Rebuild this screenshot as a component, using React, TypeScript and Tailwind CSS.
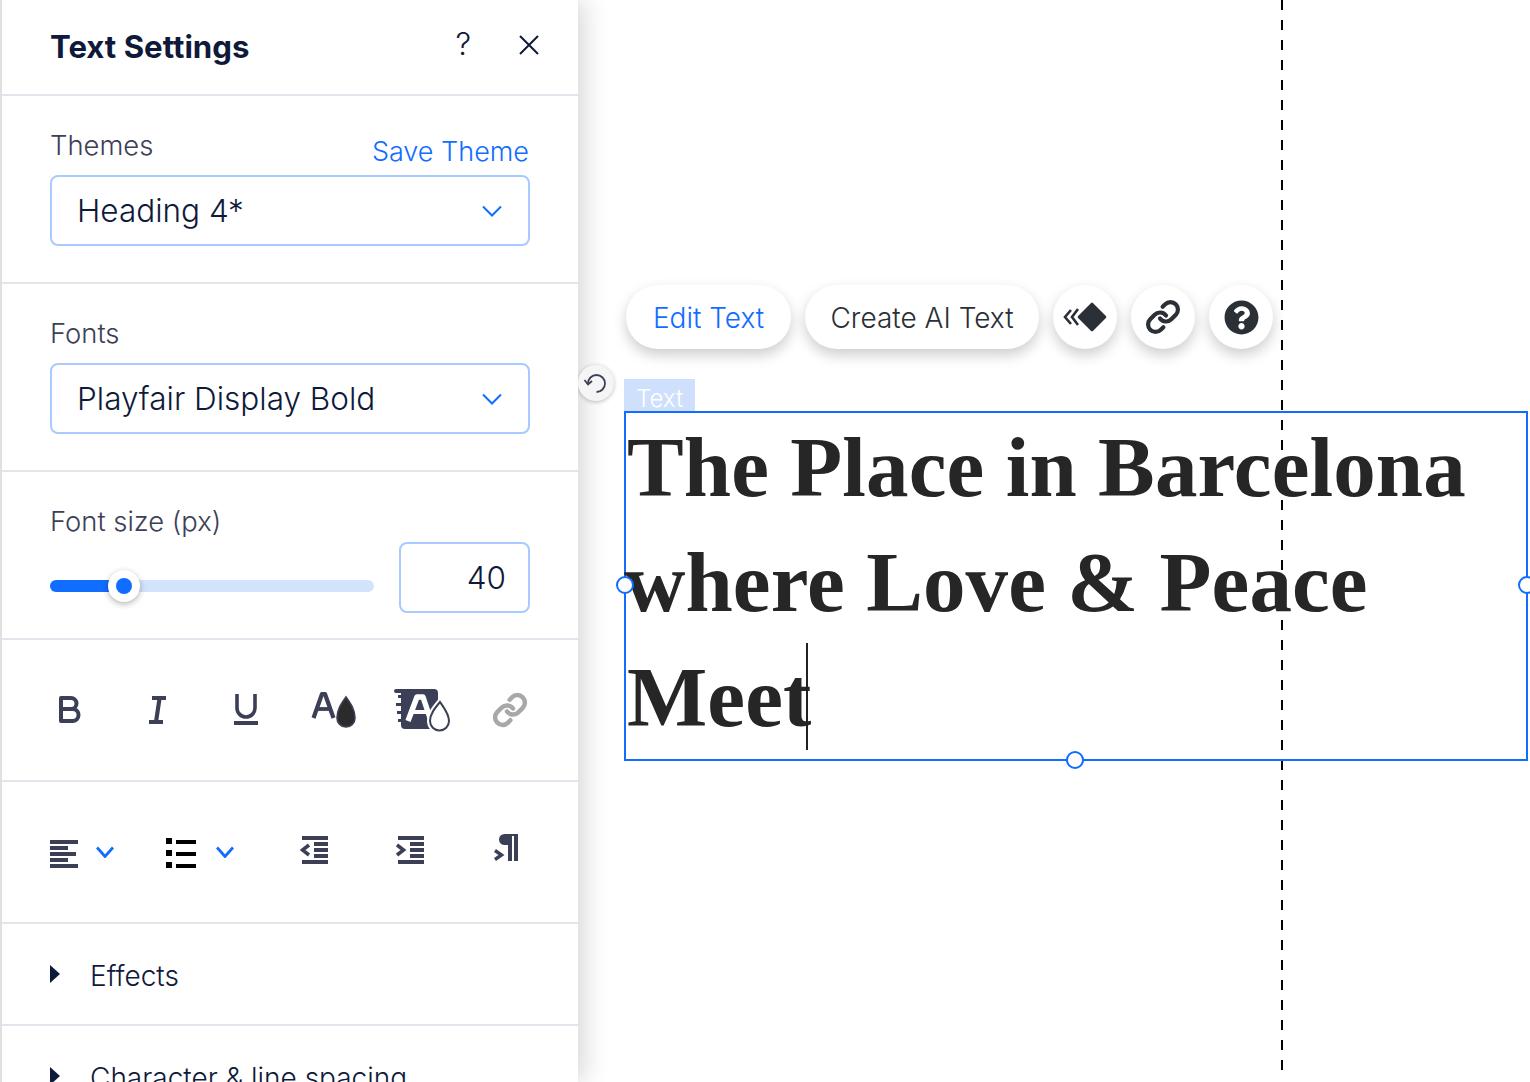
import { Link as LinkIcon } from "lucide-react";
import { FaQuestionCircle } from "react-icons/fa";

const ink = "#3b4057";

function Chevron({ width = 20, weight = 2 }: { width?: number; weight?: number }) {
  return (
    <svg width={width} height={12} viewBox={`0 0 ${width} 12`} fill="none" stroke="#116dff" strokeWidth={weight}>
      <path d={`M1 1.500 ${width / 2} 10.500 ${width - 1} 1.500`} />
    </svg>
  );
}

function Bars({ rows }: { rows: [number, number, number][] }) {
  return (
    <>
      {rows.map(([x, y, w]) => (
        <rect key={`${x}-${y}`} x={x} y={y} width={w} height="4" />
      ))}
    </>
  );
}

function BoldIcon() {
  return (
    <svg width="24" height="30" viewBox="0 0 24 30" fill="none" stroke={ink} strokeWidth="4">
      <path d="M3 3h10a5 5 0 0 1 0 11H3zM3 14h11.500a5.800 5.800 0 0 1 0 12H3z" strokeLinejoin="round" />
    </svg>
  );
}

function ItalicIcon() {
  return (
    <svg width="18" height="30" viewBox="0 0 18 30" fill={ink}>
      <path d="M3 1h14v4h-4.600l-3 20H14v4H0v-4h5.200l3-20H3z" />
    </svg>
  );
}

function UnderlineIcon() {
  return (
    <svg width="24" height="34" viewBox="0 0 24 34" fill="none" stroke={ink} strokeWidth="3.600">
      <path d="M3 1v14a9 9 0 0 0 18 0V1" />
      <path d="M0 30h24" strokeWidth="4" />
    </svg>
  );
}

function TextColorIcon() {
  return (
    <svg width="46" height="38" viewBox="0 0 46 38" fill="none">
      <path d="M2.500 27 11 3h3l8.500 24" stroke={ink} strokeWidth="4.200" strokeLinejoin="round" />
      <path d="M6 18h13" stroke={ink} strokeWidth="3.800" />
      <path d="M35 6c5 7 9 13 9 21a9 9 0 0 1-18 0c0-8 4-14 9-21z" fill="#2b2b2b" stroke={ink} strokeWidth="1.600" />
    </svg>
  );
}

function HighlightIcon() {
  return (
    <svg width="56" height="43" viewBox="0 0 56 43" fill="none">
      <path
        d="M0 2q0-2 2-2h38q4 0 4 4v34q0 2-2 2H11q-4 0-4-4v-3H4v-3h3v-5H3v-3h4v-5H2v-3h5v-5H4v-3h3V4H2q-2 0-2-2z"
        fill={ink}
      />
      <path d="M14 32 23 8h6l8 24" stroke="#fff" strokeWidth="5.500" strokeLinejoin="round" />
      <path d="M18 23h15" stroke="#fff" strokeWidth="4" />
      <path d="M46 13c4 6 9 12 9 19a9.500 9.500 0 0 1-19 0c0-7 5-13 10-19z" stroke="#fff" strokeWidth="6" />
      <path d="M46 13c4 6 9 12 9 19a9.500 9.500 0 0 1-19 0c0-7 5-13 10-19z" fill="#fff" stroke={ink} strokeWidth="2" />
    </svg>
  );
}

function AlignIcon() {
  return (
    <svg width="28" height="28" viewBox="0 0 28 28" fill={ink} className="mt-[4px]">
      <Bars rows={[[0, 0, 28], [0, 6, 18], [0, 12, 26], [0, 18, 18], [0, 24, 28]]} />
    </svg>
  );
}

function ListIcon() {
  return (
    <svg width="30" height="30" viewBox="0 0 30 30" fill="#000" className="mt-[2px]">
      <rect x="0" y="0" width="6" height="6" />
      <rect x="0" y="12" width="6" height="6" />
      <rect x="0" y="24" width="6" height="6" />
      <Bars rows={[[10, 2, 20], [10, 14, 20], [10, 26, 20]]} />
    </svg>
  );
}

function OutdentIcon() {
  return (
    <svg width="28" height="28" viewBox="0 0 28 28" fill={ink} className="mb-[4px]">
      <Bars rows={[[2, 0, 26], [14, 6, 14], [14, 12, 14], [14, 18, 14], [2, 24, 26]]} />
      <path d="M9 9 2.500 14 9 19" fill="none" stroke={ink} strokeWidth="3.600" />
    </svg>
  );
}

function IndentIcon() {
  return (
    <svg width="28" height="28" viewBox="0 0 28 28" fill={ink} className="mb-[4px]">
      <Bars rows={[[2, 0, 26], [14, 6, 14], [14, 12, 14], [14, 18, 14], [2, 24, 26]]} />
      <path d="M1 9 7.500 14 1 19" fill="none" stroke={ink} strokeWidth="3.600" />
    </svg>
  );
}

function PilcrowIcon() {
  return (
    <svg width="24" height="27" viewBox="0 0 24 27" fill={ink} className="mb-[9px]">
      <path d="M10.500 0H24v27h-4V2h-2v25h-4V11h-3.500a5.500 5.500 0 0 1 0-11z" />
      <path d="M1 16.500 7.500 21 1 25.500" fill="none" stroke={ink} strokeWidth="3.400" />
    </svg>
  );
}

function Caret() {
  return (
    <svg width="10" height="18" viewBox="0 0 10 18" fill="#0f1a3a">
      <path d="M0 0l10 9-10 9z" />
    </svg>
  );
}

function UndoIcon() {
  return (
    <svg width="26" height="26" viewBox="0 0 26 26" fill="none" stroke={ink} strokeWidth="1.800">
      <path d="M5 13.500a8.500 8.500 0 1 1 8.500 8.500" />
      <path d="M1.500 10 5 14.500 9 11" />
    </svg>
  );
}

function Select({ value }: { value: string }) {
  return (
    <div className="flex h-[71px] w-[480px] items-center justify-between rounded-lg border-2 border-[#a8caff] pl-[25px] pr-[26px] pt-px text-[31.500px] font-[350] text-[#0f1a3a]">
      <span>{value}</span>
      <Chevron />
    </div>
  );
}

function Label({ children }: { children: string }) {
  return <div className="text-[27.400px] leading-[34px] font-light text-[#3b4057]">{children}</div>;
}

function ExpandRow({ label }: { label: string }) {
  return (
    <div className="flex h-[100px] items-center gap-[30px] pl-[48px] text-[28px] font-[350] text-[#0f1a3a]">
      <Caret />
      <span className="pt-[3px]">{label}</span>
    </div>
  );
}

function Panel() {
  return (
    <aside className="relative z-10 h-[1082px] w-[578px] shrink-0 overflow-hidden border-l-2 border-[#e0e0e0] bg-white shadow-[6px_0_24px_rgba(0,0,0,0.16)]">
      <header className="flex h-[96px] items-center border-b-2 border-[#e1e6ed] pl-[48px] pr-[38px]">
        <h1 className="flex-1 text-[31.200px] font-bold text-[#0f1a3a]">Text Settings</h1>
        <span className="mr-[47px] mb-[6px] text-[31px] font-light text-[#0f1a3a]">?</span>
        <svg width="22" height="22" viewBox="0 0 22 22" stroke="#0f1a3a" strokeWidth="2" className="mb-[4px]">
          <path d="M2 2l18 18M20 2 2 20" />
        </svg>
      </header>

      <section className="h-[188px] border-b-2 border-[#e1e6ed] pl-[48px] pt-[32px]">
        <div className="flex h-[47px] w-[480px] items-start justify-between">
          <Label>Themes</Label>
          <span className="mt-[7px] pr-px text-[27px] leading-[34px] font-[350] text-[#116dff]">Save Theme</span>
        </div>
        <Select value="Heading 4*" />
      </section>

      <section className="h-[188px] border-b-2 border-[#e1e6ed] pl-[48px] pt-[32px]">
        <div className="h-[47px]">
          <Label>Fonts</Label>
        </div>
        <Select value="Playfair Display Bold" />
      </section>

      <section className="h-[168px] border-b-2 border-[#e1e6ed] pl-[48px] pt-[32px]">
        <div className="h-[38px]">
          <Label>Font size (px)</Label>
        </div>
        <div className="flex items-center">
          <div className="relative mt-[16px] h-[12px] w-[324px] rounded-full bg-[#d3e3fb]">
            <div className="h-full w-[70px] rounded-full bg-[#116dff]" />
            <div className="absolute left-[58px] top-[-10px] flex size-[32px] items-center justify-center rounded-full bg-white shadow-[0_2px_6px_rgba(0,0,0,0.3)]">
              <div className="size-[16px] rounded-full bg-[#116dff]" />
            </div>
          </div>
          <div className="ml-[25px] flex h-[71px] w-[131px] items-center justify-end rounded-lg border-2 border-[#a8caff] pr-[22px] text-[31.500px] font-[350] text-[#0f1a3a]">
            40
          </div>
        </div>
      </section>

      <section className="h-[142px] border-b-2 border-[#e1e6ed] pl-[24px]">
        <div className="grid h-full grid-cols-[repeat(6,88px)] items-center justify-items-center">
          <BoldIcon />
          <ItalicIcon />
          <UnderlineIcon />
          <TextColorIcon />
          <HighlightIcon />
          <LinkIcon size={36} color="#a8a8a8" strokeWidth={3} />
        </div>
      </section>

      <section className="flex h-[142px] items-center border-b-2 border-[#e1e6ed] pl-[48px]">
        <div className="flex w-[116px] items-center">
          <AlignIcon />
          <span className="ml-[18px]">
            <Chevron width={18} weight={2.800} />
          </span>
        </div>
        <div className="flex w-[134px] items-center">
          <ListIcon />
          <span className="ml-[20px]">
            <Chevron width={18} weight={2.800} />
          </span>
        </div>
        <div className="w-[96px]">
          <OutdentIcon />
        </div>
        <div className="w-[98px]">
          <IndentIcon />
        </div>
        <PilcrowIcon />
      </section>

      <section className="border-b-2 border-[#e1e6ed]">
        <ExpandRow label="Effects" />
      </section>
      <ExpandRow label="Character & line spacing" />

      <div className="absolute left-[-2px] top-[732px] h-[98px] w-[2px] bg-[#e46a6f]" />
      <div className="absolute left-[-2px] top-[855px] h-[52px] w-[2px] bg-[#e46a6f]" />
    </aside>
  );
}

function ToolPill({ label, blue, width }: { label: string; blue?: boolean; width: string }) {
  return (
    <button
      className={`flex h-[64px] items-center justify-center rounded-full bg-white pt-[2px] text-[28px] font-light shadow-[0_6px_14px_rgba(0,0,0,0.2)] ${width} ${
        blue ? "text-[#116dff]" : "text-[#2b2f36]"
      }`}
    >
      {label}
    </button>
  );
}

function ToolCircle({ children }: { children: React.ReactNode }) {
  return (
    <button className="flex size-[64px] items-center justify-center rounded-full bg-white text-[#2b2f36] shadow-[0_6px_14px_rgba(0,0,0,0.2)]">
      {children}
    </button>
  );
}

function Handle({ className }: { className: string }) {
  return <div className={`absolute size-[18px] rounded-full border-2 border-[#116dff] bg-white ${className}`} />;
}

function Canvas() {
  return (
    <main className="relative h-[1082px] flex-1 overflow-hidden bg-white">
      <div className="absolute left-[703px] top-0 h-[1076px] w-[2px] bg-[repeating-linear-gradient(to_bottom,#000_0,#000_10px,transparent_10px,transparent_20px)]" />

      <div className="absolute left-[48px] top-[285px] flex gap-[14px]">
        <ToolPill label="Edit Text" blue width="w-[165px]" />
        <ToolPill label="Create AI Text" width="w-[234px]" />
        <ToolCircle>
          <svg width="44" height="30" viewBox="0 0 44 30" fill="none" stroke="#2b2f36" strokeWidth="2.600">
            <path d="M8 8 2 15l6 7M15 7 9 15l6 8" />
            <path d="M29 2 42 15 29 28 16 15z" fill="#2b2f36" strokeLinejoin="round" />
          </svg>
        </ToolCircle>
        <ToolCircle>
          <LinkIcon size={36} strokeWidth={2.800} />
        </ToolCircle>
        <ToolCircle>
          <FaQuestionCircle size={35} />
        </ToolCircle>
      </div>

      <div className="absolute left-0 top-[365px] z-20 flex size-[36px] items-center justify-center rounded-full bg-[#f5f5f5] shadow-[0_1px_4px_rgba(0,0,0,0.25)]">
        <UndoIcon />
      </div>

      <div className="absolute left-[46px] top-[379px] h-[32px] w-[71px] bg-[#cfe0fc] pl-[12px] text-[24px] leading-[40px] font-light text-white">
        Text
      </div>

      <div className="absolute left-[46px] top-[411px] h-[350px] w-[904px] border-2 border-[#116dff]">
        <div className="mt-[-3px] font-['Liberation_Serif',serif] text-[85px] leading-[115px] font-bold tracking-[0.1px] whitespace-nowrap text-[#262626]">
          <div className="pl-px">The Place in Barcelona</div>
          <div className="ml-[-2px]">where Love &amp; Peace</div>
          <div className="pl-px">Meet</div>
        </div>
        <div className="absolute left-[180px] top-[230px] h-[107px] w-[2px] bg-[#222]" />
        <Handle className="left-[-10px] top-[163px]" />
        <Handle className="right-[-10px] top-[163px]" />
        <Handle className="left-[440px] bottom-[-10px]" />
      </div>
    </main>
  );
}

export default function App() {
  return (
    <div className="flex h-[1082px] w-[1530px] overflow-hidden bg-white font-['Inter',sans-serif]">
      <Panel />
      <Canvas />
    </div>
  );
}
